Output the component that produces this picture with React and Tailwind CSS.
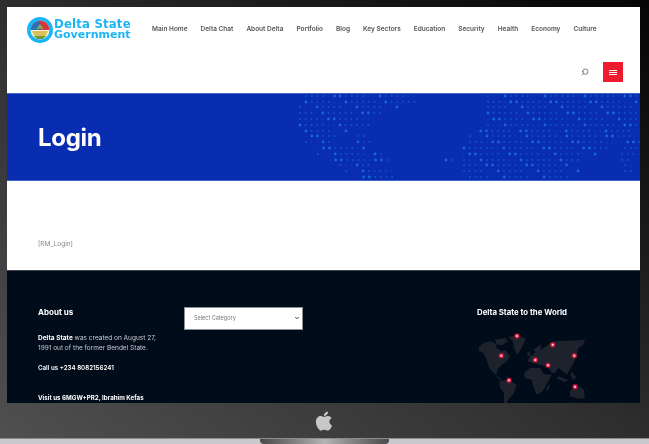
import React from "react";
import { FaApple } from "react-icons/fa";
import { FiSearch } from "react-icons/fi";
import { ChevronDown } from "lucide-react";

const navItems = ["Main Home", "Delta Chat", "About Delta", "Portfolio", "Blog", "Key Sectors", "Education", "Security", "Health", "Economy", "Culture"];

// dotted world map in the hero: [y, x ranges] in hero pixels
const dotRows = [
  [2, [[36, 146], [218, 370]]],
  [8, [[36, 146], [218, 370]]],
  [13, [[30, 128], [218, 370]]],
  [19, [[30, 112], [218, 370]]],
  [25, [[30, 100], [218, 370]]],
  [31, [[30, 100], [218, 370]]],
  [37, [[36, 80], [205, 370]]],
  [42, [[36, 66], [88, 96], [200, 365]]],
  [48, [[36, 60], [88, 100], [200, 345], [352, 370]]],
  [54, [[48, 96], [194, 340], [355, 368]]],
  [60, [[48, 116], [194, 330], [352, 370]]],
  [66, [[60, 122], [176, 184], [194, 310], [352, 362]]],
  [71, [[70, 100], [194, 300], [355, 362]]],
  [77, [[76, 124], [194, 310], [355, 362]]],
  [83, [[88, 124], [200, 300]]],
];

const dots = [];
dotRows.forEach(([y, ranges], rowIndex) => {
  ranges.forEach(([from, to]) => {
    for (let x = from; x <= to; x += 5.7) {
      const seed = (Math.round(x) * 7 + rowIndex * 13) % 5;
      dots.push({ x, y, r: seed === 0 ? 1.4 : seed === 3 ? 0.6 : 1, o: seed === 0 ? 0.8 : 0.5 });
    }
  });
});

const pins = [[231, 34], [338, 60], [184, 93], [286, 106], [403, 93], [324, 122], [207, 167], [405, 186]];

const HeroMap = () => (
  <svg width="370" height="86" viewBox="0 0 370 86" className="shrink-0">
    {dots.map((d, i) => (
      <circle key={i} cx={d.x} cy={d.y} r={d.r} fill="#1c78d6" opacity={d.o} />
    ))}
  </svg>
);

const WorldMap = () => (
  <svg width="120" height="75" viewBox="111 25 360 225" className="block">
    <g fill="#1d222c">
      <path d="M115 70 130 55 150 50 165 55 170 70 185 80 195 75 210 95 200 110 185 120 172 135 170 150 162 145 148 130 140 105 130 85 118 80Z" />
      <path d="M165 45 195 40 205 50 185 62 170 60Z" />
      <path d="M205 38 230 30 258 42 245 70 232 90 222 70 218 50Z" />
      <path d="M165 150 180 160 190 168 175 162Z" />
      <path d="M178 170 205 165 230 180 222 205 205 225 198 240 192 235 192 205 180 190Z" />
      <path d="M252 145 270 130 300 130 312 148 335 150 320 178 308 200 290 210 280 185 275 165 255 160Z" />
      <path d="M262 110 270 95 290 80 310 70 340 50 390 48 435 45 430 60 415 70 410 95 398 120 380 150 370 140 355 130 345 145 335 145 322 125 300 120 280 115Z" />
      <path d="M280 75 300 60 305 68 290 85Z" />
      <path d="M262 85 272 80 270 95 262 95Z" />
      <path d="M355 155 385 165 375 172 350 162Z" />
      <path d="M395 140 410 160 398 165 392 150Z" />
      <path d="M390 200 410 180 432 195 434 220 415 222 390 215Z" />
      <path d="M325 180 330 180 322 200 318 195Z" />
      <path d="M450 225 455 222 440 235Z" />
    </g>
    {pins.map(([x, y]) => (
      <g key={x}>
        <circle cx={x} cy={y} r="9" fill="#e3173e" opacity="0.4" />
        <circle cx={x} cy={y} r="6.5" fill="#f01f48" />
        <circle cx={x} cy={y} r="3" fill="#ffe3e6" />
      </g>
    ))}
  </svg>
);

const LogoBadge = () => (
  <svg width="26" height="26" viewBox="0 0 26 26" className="shrink-0">
    <circle cx="13" cy="13" r="13" fill="#19b5f5" />
    <circle cx="13" cy="13" r="9.5" fill="#f4f1d8" />
    <path d="M3.500 13A9.500 9.500 0 0 1 13 3.500V13Z" fill="#2c6fb8" />
    <path d="M13 3.500A9.500 9.500 0 0 1 22.500 13H13Z" fill="#d8363a" />
    <path d="M5 14H21L19 19H7Z" fill="#d9c25a" />
    <path d="M7 19H19L16 22H10Z" fill="#6f9a3f" />
    <path d="M9 12 13 7 17 12Z" fill="#7ba75a" />
  </svg>
);

export default function App() {
  return (
    <div className="w-[649px] h-[444px] overflow-hidden flex flex-col bg-linear-to-tr from-[#505050] via-[#2e2e2e] to-[#060606] font-['Inter',sans-serif]">
      <div className="mx-[7px] mt-[7px] w-[633px] h-[396px] shrink-0 overflow-hidden bg-white blur-[0.4px]">
        <header className="h-[86px] pl-5 pr-[17px]">
          <div className="flex items-center h-[44px]">
            <div className="flex items-center w-[125px] shrink-0 pt-px">
              <LogoBadge />
              <div className="font-['DejaVu_Sans',sans-serif] font-bold text-[#19b5f5] leading-[10.500px] ml-px">
                <div className="text-[11.700px] tracking-[0.2px]">Delta State</div>
                <div className="text-[11px]">Government</div>
              </div>
            </div>
            <nav className="flex gap-[13px] pt-[2px] text-[6.500px] font-semibold text-[#555] whitespace-nowrap">
              {navItems.map((item) => (
                <span key={item}>{item}</span>
              ))}
            </nav>
          </div>
          <div className="flex items-center justify-end gap-[14px] h-[20px] mt-[11px]">
            <FiSearch className="text-[#444] text-[8px] -scale-x-100" />
            <div className="w-[20px] h-[20px] bg-[#ed1c2e] flex flex-col items-center justify-center gap-px">
              <span className="block w-[8px] h-px bg-white" />
              <span className="block w-[8px] h-px bg-white" />
              <span className="block w-[8px] h-px bg-white" />
            </div>
          </div>
        </header>

        <section className="h-[88px] bg-[#082db1] border-y border-[#3f63cc] flex items-center justify-between pl-[31px]">
          <h1 className="text-[24px] font-bold text-white pt-[2px] tracking-[-0.3px]">Login</h1>
          <HeroMap />
        </section>

        <main className="h-[89px] pl-[31px] pt-[59px] text-[6.500px] text-[#888]">[RM_Login]</main>

        <footer className="h-[200px] bg-[#010c1a] border-t border-[#3a414c] pl-[31px] pt-[36px] grid grid-cols-[146px_293px_1fr] text-white">
          <div>
            <h3 className="text-[8px] font-bold leading-[10px]">About us</h3>
            <p className="mt-[16px] text-[6.500px] leading-[10px] text-[#c9ccd1]">
              <b className="text-white">Delta State</b> was created on August 27,
              <br />
              1991 out of the former Bendel State.
            </p>
            <p className="mt-[10px] text-[6.200px] leading-[10px] font-semibold">Call us +234 8082156241</p>
            <p className="mt-[20px] text-[6.200px] leading-[10px] font-bold">Visit us 6MGW+PR2, Ibrahim Kefas</p>
          </div>
          <div>
            <div className="relative w-[119px]">
              <select className="block appearance-none w-[119px] h-[23px] bg-white border border-[#8a8f98] text-[5.500px] text-[#777] pl-[9px]">
                <option>Select Category</option>
              </select>
              <ChevronDown className="absolute right-[3px] top-[8px] w-[6px] h-[6px] text-[#444]" strokeWidth={4} />
            </div>
          </div>
          <div>
            <h3 className="text-[7.800px] font-bold leading-[10px] whitespace-nowrap">Delta State to the World</h3>
            <div className="mt-[16px]">
              <WorldMap />
            </div>
          </div>
        </footer>
      </div>

      <div className="h-[35px] shrink-0 flex items-center justify-center pr-px">
        <FaApple className="text-[#c8c8c8] w-[20px] h-[22px]" />
      </div>

      <div className="flex-1 bg-[#c9c9cd] border-t border-[#8c8c8c] flex justify-center">
        <div className="w-[129px] bg-linear-to-r from-[#4a4a4a] via-[#b5b5b5] to-[#4a4a4a] rounded-b-[4px]" />
      </div>
    </div>
  );
}
